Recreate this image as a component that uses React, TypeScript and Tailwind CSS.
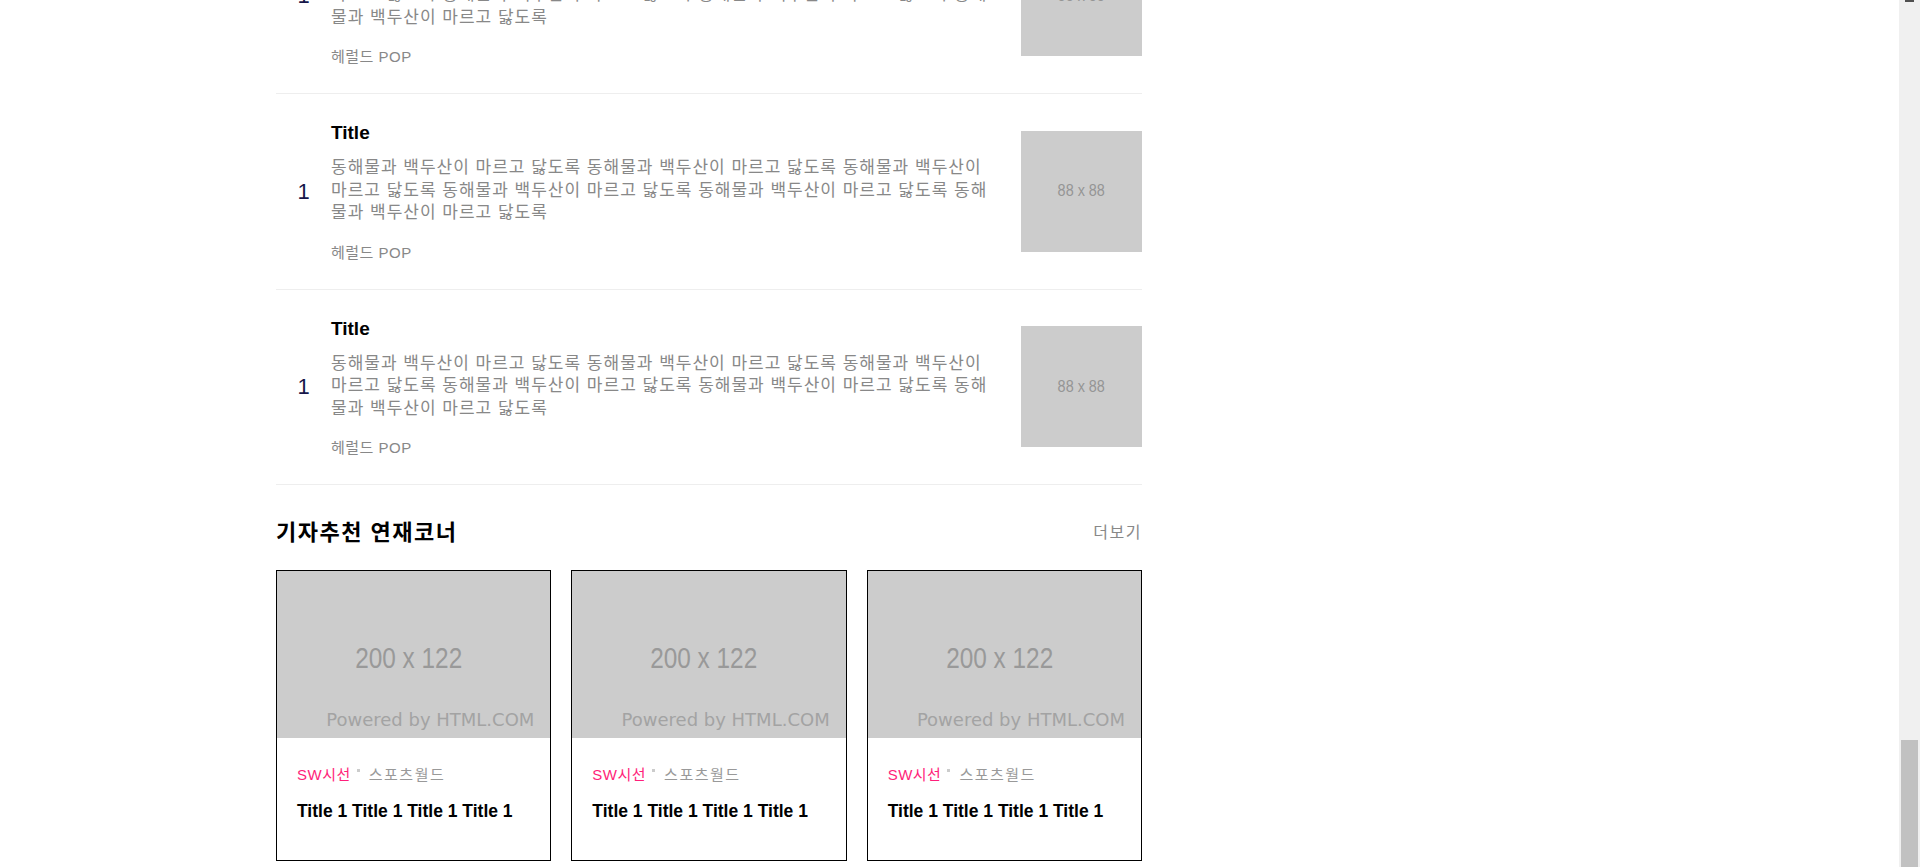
const DESC = Array(6).fill("동해물과 백두산이 마르고 닳도록").join(" ");

interface Story {
  id: number;
  rank: number;
  title: string;
  summary: string;
  source: string;
}

interface Series {
  id: number;
  section: string;
  press: string;
  title: string;
}

const STORIES: Story[] = [1, 2, 3].map((id) => ({
  id,
  rank: 1,
  title: "Title",
  summary: DESC,
  source: "헤럴드 POP",
}));

const SERIES: Series[] = [1, 2, 3].map((id) => ({
  id,
  section: "SW시선",
  press: "스포츠월드",
  title: "Title 1 Title 1 Title 1 Title 1",
}));

function Thumb88() {
  return (
    <div className="flex h-[121px] w-[121px] shrink-0 items-center justify-center bg-[#cccccc]">
      <span className="inline-block scale-x-[0.9] text-[16px] leading-none text-[#959595]">88 x 88</span>
    </div>
  );
}

function Thumb200() {
  return (
    <div className="flex h-[167px] flex-col items-center bg-[#cccccc] pt-[70px]">
      <span className="inline-block -translate-x-[5px] scale-x-[0.84] text-[29px] leading-[34px] text-[#999999]">
        200 x 122
      </span>
      <span className="mt-[35px] self-end pr-[16px] font-['DejaVu_Sans',sans-serif] text-[18px] leading-[20px] text-[#a3a3a3]">
        Powered by HTML.COM
      </span>
    </div>
  );
}

function StoryRow({ s }: { s: Story }) {
  return (
    <li className="flex items-center border-b border-[#eeeeee] py-[25px]">
      <span className="w-[55px] shrink-0 text-center text-[22px] text-[#16164a]">{s.rank}</span>
      <div className="min-w-0 flex-1 pr-[28px]">
        <p className="text-[19px] font-bold leading-[27px] text-black">{s.title}</p>
        <p className="mt-[11px] text-[17px] leading-[22.5px] tracking-[1px] text-[#888888]">{s.summary}</p>
        <p className="mt-[17px] text-[15px] leading-[22px] tracking-[0.5px] text-[#888888]">{s.source}</p>
      </div>
      <Thumb88 />
    </li>
  );
}

function SeriesCard({ c }: { c: Series }) {
  return (
    <div className="border border-black">
      <Thumb200 />
      <div className="px-[20px] pt-[26px] pb-[37px]">
        <p className="flex items-start text-[15px] leading-[22px]">
          <span className="tracking-[0.5px] text-[#ff1f7a]">{c.section}</span>
          <span className="ml-[6px] mt-[5px] inline-block h-[3px] w-[3px] bg-[#cccccc]" />
          <span className="ml-[9px] tracking-[1.5px] text-[#999999]">{c.press}</span>
        </p>
        <p className="mt-[13px] text-[17.5px] font-bold leading-[24px] text-black">{c.title}</p>
      </div>
    </div>
  );
}

function Scrollbar() {
  return (
    <div className="flex w-[21px] shrink-0 flex-col items-center justify-between bg-[#f0f0f0]">
      <div className="h-[2px] w-[9px] bg-[#505050]" />
      <div className="h-[127px] w-[17px] bg-[#c1c1c1]" />
    </div>
  );
}

export default function App() {
  return (
    <div className="flex h-[867px] overflow-hidden bg-white font-['Liberation_Sans','Noto_Sans_CJK_KR',sans-serif]">
      <div className="flex min-w-0 flex-1 flex-col justify-end overflow-hidden">
        <div className="ml-[276px] w-[866px] shrink-0 pb-[6px]">
          <ul>
            {STORIES.map((s) => (
              <StoryRow key={s.id} s={s} />
            ))}
          </ul>

          <section className="mt-[33px]">
            <div className="flex items-center justify-between">
              <h2 className="text-[22px] font-bold leading-[30px] tracking-[1.5px] text-black">기자추천 연재코너</h2>
              <a className="text-[16px] leading-[30px] tracking-[1.5px] text-[#888888]">더보기</a>
            </div>
            <div className="mt-[22px] grid grid-cols-3 gap-[20px]">
              {SERIES.map((c) => (
                <SeriesCard key={c.id} c={c} />
              ))}
            </div>
          </section>
        </div>
      </div>
      <Scrollbar />
    </div>
  );
}
